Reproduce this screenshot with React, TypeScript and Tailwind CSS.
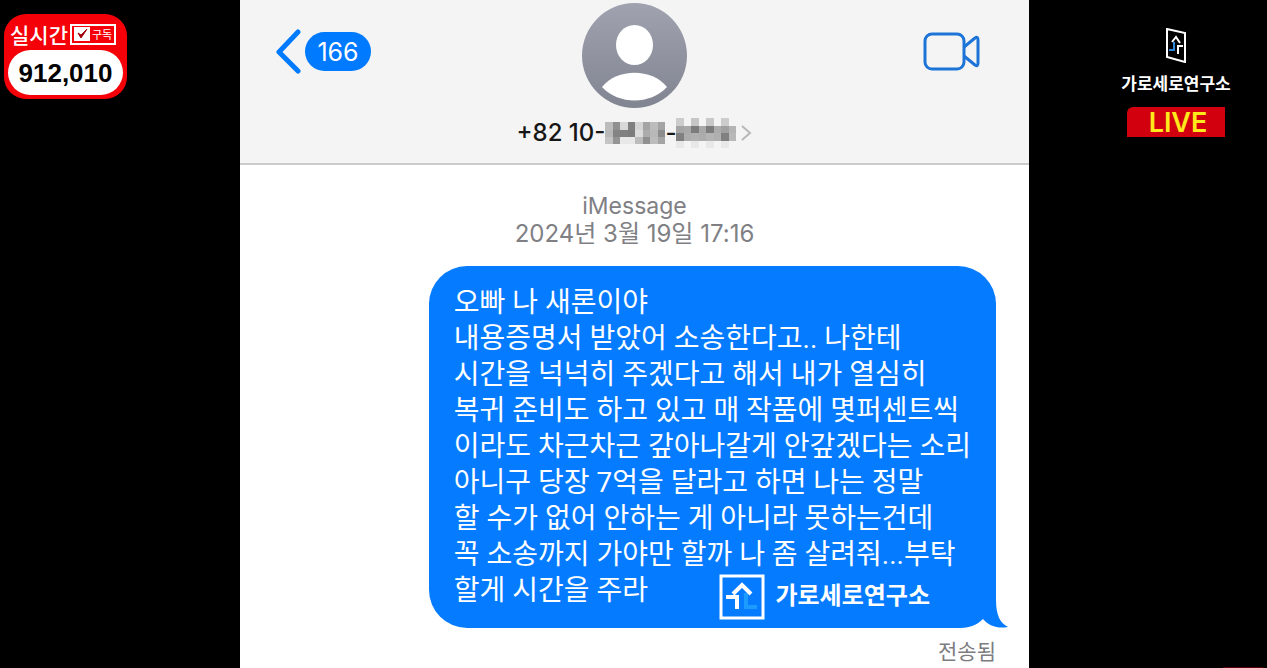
const KR = "font-['Noto_Sans_CJK_KR',sans-serif]"

const message = [
  "오빠 나 새론이야",
  "내용증명서 받았어 소송한다고.. 나한테",
  "시간을 넉넉히 주겠다고 해서 내가 열심히",
  "복귀 준비도 하고 있고 매 작품에 몇퍼센트씩",
  "이라도 차근차근 갚아나갈게 안갚겠다는 소리",
  "아니구 당장 7억을 달라고 하면 나는 정말",
  "할 수가 없어 안하는 게 아니라 못하는건데",
  "꼭 소송까지 가야만 할까 나 좀 살려줘...부탁",
  "할게 시간을 주라",
]

const App = () => {
  return (
    <div className={`min-h-screen bg-black grid grid-cols-[240fr_789fr_238fr] ${KR}`}>
      <aside className="pl-1 pt-3.5">
        <SubscriberBadge />
      </aside>

      <main className="bg-white flex flex-col overflow-hidden">
        <ChatHeader />

        <div className="pt-[27px] text-center leading-7 text-[#808084] font-['Inter','Noto_Sans_CJK_KR',sans-serif]">
          <p className="text-[23px] leading-7">iMessage</p>
          <p className="text-2xl leading-7">2024년 3월 19일 17:16</p>
        </div>

        <div className="flex flex-col items-end pr-[33px] pt-[18px]">
          <Bubble />
          <p className="pt-1.5 text-[21px] leading-8 text-[#7c7c80]">전송됨</p>
        </div>
      </main>

      <aside className="flex flex-col">
        <div className="flex flex-col items-center pt-7 pl-14">
          <DoorLogo />
          <p className="mt-2 text-[17px] leading-6 font-bold text-white">가로세로연구소</p>
          <div className="mt-3 w-[98px] h-[30px] rounded-tl-md bg-[#d2000f] pl-1 pt-0.5 flex items-center justify-center">
            <span className="text-[27px] leading-7 font-semibold text-[#ffe81c] font-['Inter',sans-serif]">LIVE</span>
          </div>
        </div>
        <div className="mt-auto mr-1 self-end w-10 h-px bg-[#5a0008]" />
      </aside>
    </div>
  )
}

const SubscriberBadge = () => {
  return (
    <div className="w-[123px] h-[85px] rounded-[22px] bg-[#f50008] px-1 pt-2 pb-1 flex flex-col justify-between">
      <div className="flex items-center gap-0.5 pl-0.5">
        <span className="text-[21px] leading-6 font-medium text-white">실시간</span>
        <span className="w-[46px] h-[21px] border-2 border-white flex items-center gap-0.5 pl-0.5">
          <svg width="16" height="14" viewBox="0 0 16 14">
            <rect width="16" height="14" fill="#fff" />
            <path d="M4 6 L7 11 L13 2 L7 8 Z" fill="#a00008" stroke="#a00008" strokeWidth="1" />
          </svg>
          <span className="text-[11px] leading-4 text-white">구독</span>
        </span>
      </div>
      <div className="h-[45px] rounded-full bg-white flex items-center justify-center">
        <span className="text-[26px] leading-8 font-bold text-black font-['Liberation_Sans',sans-serif]">912,010</span>
      </div>
    </div>
  )
}

const ChatHeader = () => {
  return (
    <header className="h-[165px] bg-[#f4f4f4] border-b-2 border-[#cbcbcb] grid grid-cols-[1fr_auto_1fr] items-start">
      <button type="button" aria-label="Back" className="mt-7 ml-9 flex items-center gap-1 justify-self-start">
        <svg width="25" height="46" viewBox="0 0 25 46" fill="none">
          <path d="M22 4 L3 24 L22 43" stroke="#007aff" strokeWidth="5" strokeLinecap="round" strokeLinejoin="round" />
        </svg>
        <span className="w-[66px] h-[39px] pt-0.5 rounded-full bg-[#007aff] text-white text-[25px] leading-8 flex items-center justify-center font-['Inter',sans-serif]">
          166
        </span>
      </button>

      <button type="button" className="flex flex-col items-center pt-[3px]">
        <svg width="105" height="105" viewBox="0 0 105 105">
          <defs>
            <linearGradient id="avatar" x1="0" y1="0" x2="0" y2="1">
              <stop offset="0" stopColor="#a0a3af" />
              <stop offset="1" stopColor="#818591" />
            </linearGradient>
          </defs>
          <circle cx="52.5" cy="52.5" r="52.5" fill="url(#avatar)" />
          <ellipse cx="52.5" cy="42" rx="18.5" ry="20" fill="#fff" />
          <path d="M20 84 C35 65 70 65 85 84 C68 102 37 102 20 84 Z" fill="#fff" />
        </svg>
        <span className="mt-[9px] flex items-center text-2xl leading-8 text-[#161616] font-medium font-['Inter',sans-serif]">
          +82 10-
          <Mosaic rows={maskedFirst} />
          -
          <Mosaic rows={maskedLast} />
          <svg className="ml-1" width="12" height="18" viewBox="0 0 12 18" fill="none">
            <path d="M2 2 L10 9 L2 16" stroke="#b8b8b8" strokeWidth="2" />
          </svg>
        </span>
      </button>

      <button type="button" aria-label="FaceTime" className="mt-8 mr-12 justify-self-end">
        <svg width="58" height="39" viewBox="0 0 58 39" fill="none" stroke="#1d74d8" strokeWidth="3" strokeLinejoin="round">
          <rect x="2" y="2" width="39" height="35" rx="7" />
          <path d="M41 15 L52 6 Q55 4 55 8 V31 Q55 35 52 33 L41 24" />
        </svg>
      </button>
    </header>
  )
}

// censored digits, drawn as grey blocks
const maskedFirst = [
  ["#bcbcbc", "#909090", "#d8d8d8", "#808080", "#d4d4d4", "#a4a4a4", "#bcbcbc", "#a4a4a4"],
  ["#b8b8b8", "#848484", "#808080", "#7c7c7c", "#dcdcdc", "#acacac", "#b8b8b8", "#8c8c8c"],
  ["#c4c4c4", "#949494", "#e8e8e8", "#e8e8e8", "#bcbcbc", "#909090", "#bcbcbc", "#a4a4a4"],
]

const maskedLast = [
  ["#cccccc", "#f4f4f4", "#c6c6c6", "#f4f4f4", "#c8c8c8", "#f4f4f4", "#cccccc", "#f4f4f4"],
  ["#a4a4a4", "#a8a8a8", "#7c7c7c", "#a8a8a8", "#7c7c7c", "#acacac", "#a0a0a0", "#b4b4b4"],
  ["#808080", "#acacac", "#b0b0b0", "#acacac", "#b4b4b4", "#b0b0b0", "#808080", "#b8b8b8"],
  ["#e8e8e8", "#f4f4f4", "#e8e8e8", "#f4f4f4", "#e8e8e8", "#f4f4f4", "#e8e8e8", "#f4f4f4"],
]

const Mosaic = ({ rows }: { rows: string[][] }) => {
  const width = rows[0].length
  const height = rows.length
  return (
    <svg className="w-[60px]" viewBox={`0 0 ${width} ${height}`} shapeRendering="crispEdges">
      {rows.map((row, y) =>
        row.map((fill, x) => <rect key={`${x}-${y}`} x={x} y={y} width="1" height="1" fill={fill} />),
      )}
    </svg>
  )
}

const Bubble = () => {
  return (
    <div className="relative rounded-[38px] bg-[#057bff] pl-[25px] pr-[25px] pt-[19px] pb-[19px] text-white">
      <div className="text-[28px] leading-9 whitespace-nowrap font-['Roboto','Noto_Sans_CJK_KR',sans-serif]">
        {message.map((line) => (
          <p key={line}>{line}</p>
        ))}
      </div>

      <svg className="absolute -right-3 bottom-0" width="54" height="40" viewBox="0 0 54 40">
        <path d="M42 0 V12 C42 27 46 35 54 39 C44 41 35 38 29 31 C23 37 16 40 4 40 Z" fill="#057bff" />
      </svg>

      <div className="absolute right-[66px] bottom-2 flex items-center gap-2.5">
        <SquareLogo />
        <span className="pb-1.5 text-2xl leading-9 font-bold">가로세로연구소</span>
      </div>
    </div>
  )
}

const SquareLogo = () => {
  return (
    <svg width="46" height="46" viewBox="0 0 46 46" fill="none" strokeWidth="4">
      <rect x="2" y="2" width="42" height="42" stroke="#fff" strokeWidth="3" />
      <path d="M27 19 V33 H38" stroke="#1c9cff" />
      <path d="M14 20 L23 11 L32 20" stroke="#fff" />
      <path d="M7 23 H18 V35" stroke="#fff" />
    </svg>
  )
}

const DoorLogo = () => {
  return (
    <svg width="20" height="35" viewBox="0 0 20 35" fill="none" strokeWidth="2">
      <path d="M1 1 L19 5 V34 L1 29 Z" stroke="#fff" />
      <path d="M3 22 H8 V14" stroke="#2c86dc" />
      <path d="M6 14 L10 9 L14 15" stroke="#fff" />
      <path d="M12 26 V18 H17" stroke="#fff" />
    </svg>
  )
}

export default App
